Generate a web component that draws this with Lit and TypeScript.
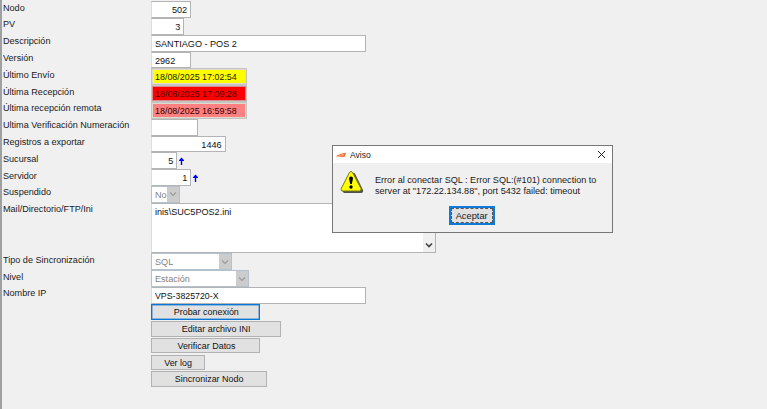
import { LitElement, html, css, svg } from "lit";
import { customElement } from "lit/decorators.js";
import { styleMap } from "lit/directives/style-map.js";

type Row = {
  label?: string;
  kind: "input" | "date" | "combo" | "area" | "button";
  value: string;
  width: number;
  tone?: string;
  arrow?: boolean;
};

const ROWS: Row[] = [
  { label: "Nodo", kind: "input", value: "502", width: 40, tone: "right" },
  { label: "PV", kind: "input", value: "3", width: 33, tone: "right" },
  { label: "Descripción", kind: "input", value: "SANTIAGO - POS 2", width: 215 },
  { label: "Versión", kind: "input", value: "2962", width: 40 },
  { label: "Último Envío", kind: "date", value: "18/08/2025 17:02:54", width: 96, tone: "yellow" },
  { label: "Última Recepción", kind: "date", value: "18/08/2025 17:09:28", width: 96, tone: "red" },
  { label: "Última recepción remota", kind: "date", value: "18/08/2025 16:59:58", width: 96, tone: "pink" },
  { label: "Ultima Verificación Numeración", kind: "input", value: "", width: 47 },
  { label: "Registros a exportar", kind: "input", value: "1446", width: 75, tone: "right" },
  { label: "Sucursal", kind: "input", value: "5", width: 26, tone: "right", arrow: true },
  { label: "Servidor", kind: "input", value: "1", width: 40, tone: "right", arrow: true },
  { label: "Suspendido", kind: "combo", value: "No", width: 29 },
  { label: "Mail/Directorio/FTP/Ini", kind: "area", value: "inis\\SUC5POS2.ini", width: 285 },
  { label: "Tipo de Sincronización", kind: "combo", value: "SQL", width: 81 },
  { label: "Nivel", kind: "combo", value: "Estación", width: 98 },
  { label: "Nombre IP", kind: "input", value: "VPS-3825720-X", width: 215, tone: "tight" },
  { kind: "button", value: "Probar conexión", width: 109, tone: "focused" },
  { kind: "button", value: "Editar archivo INI", width: 130 },
  { kind: "button", value: "Verificar Datos", width: 109 },
  { kind: "button", value: "Ver log", width: 54 },
  { kind: "button", value: "Sincronizar Nodo", width: 116 },
];

const chevron = svg`<path d="M1 1.5 L4 4.5 L7 1.5" fill="none" stroke="currentColor" stroke-width="1.1"/>`;

@customElement("app-root")
export class AppRoot extends LitElement {
  static styles = css`
    :host {
      display: block;
      position: relative;
      box-sizing: border-box;
      width: 767px;
      height: 409px;
      overflow: hidden;
      background: #f0f0f0;
      border-left: 2px solid #a0a0a0;
      font: 9.7px/12px "Liberation Sans", Arial, sans-serif;
      color: #1a1a1a;
    }
    * { box-sizing: border-box; }
    .t { display: inline-block; transform: scaleX(0.938); transform-origin: left; white-space: nowrap; }
    .right .t { transform-origin: right; }
    .tight .t { transform: scaleX(0.907); }
    .date .t { transform: scaleX(0.92); }
    .button .t { transform: scaleX(0.923); transform-origin: center; }
    .accept .t { transform: scaleX(0.96); transform-origin: center; }
    .form { padding-top: 1.2px; display: flex; flex-direction: column; }
    .row { display: grid; grid-template-columns: 149px auto; height: 16.8px; flex: none; }
    .row.area-row { height: 50.6px; }
    .label { padding: 0.4px 0 0 1px; white-space: nowrap; }
    .cell { display: flex; height: 100%; }
    .field {
      background: #fff;
      border: 1px solid #b4b4b4;
      border-left-color: #dcdcdc;
      height: 16.8px;
      padding: 2px 2.5px 0;
      white-space: nowrap;
      color: #111;
    }
    .right { text-align: right; padding-right: 3px; }
    .date { padding: 2px 2.5px 0; border: 1px solid #c4c4c4; box-shadow: inset 0 0 0 1px #e0dccb; color: #201800; }
    .yellow { background: #ff0; }
    .red { background: #f00; color: #480000; box-shadow: inset 0 0 0 1px #d88; }
    .pink { background: #ff8080; color: #300; }
    .arrow { width: 5px; height: 9px; margin: 5px 0 0 2px; color: #00f; }
    .combo { display: flex; padding: 0; border: 1px solid #b5c2ce; color: #838383; }
    .combo-text { flex: 1; min-width: 0; padding: 2px 0 0 2.5px; }
    .combo-btn { width: 12px; flex: none; background: #ccc; color: #999; display: flex; align-items: center; justify-content: center; }
    .combo-btn svg, .scroll svg { width: 8px; height: 6px; }
    .area { height: 50.6px; display: flex; padding: 0; }
    .area-text { flex: 1; padding: 2px 2.5px; }
    .scroll { width: 12px; background: #f0f0f0; color: #404040; display: flex; align-items: flex-end; justify-content: center; padding-bottom: 4px; }
    .scroll path { stroke-width: 1.6; }
    .button {
      height: 15.5px;
      margin-top: .5px;
      border: 1px solid #b2b2b2;
      background: #e1e1e1;
      text-align: center;
      line-height: 14px;
      padding-left: 1px;
      color: #111;
    }
    .focused { border-color: #0878d7; box-shadow: inset 0 0 0 .5px #3c8edb; }
    .dialog {
      position: absolute;
      left: 330px;
      top: 145px;
      width: 281px;
      height: 88px;
      border: 1px solid #777;
      background: #f0f0f0;
      display: flex;
      flex-direction: column;
    }
    .title { height: 17px; flex: none; background: #fff; display: flex; align-items: center; padding: 0 6px 0 3px; font-size: 9px; }
    .title-text { flex: 1; padding-left: 4px; }
    .title-text .t { transform: scaleX(0.95); }
    .logo { width: 10px; height: 6px; }
    .close { width: 9px; height: 9px; }
    .message { display: flex; padding: 7px 0 0 7px; height: 43px; flex: none; }
    .warn { width: 24px; height: 24px; flex: none; }
    .msg-text { padding: 3.5px 0 0 11px; line-height: 11.2px; white-space: nowrap; }
    .accept { align-self: center; width: 46px; height: 19px; border: 2px solid #0f7ad8; background: #e1e1e1; padding: 0; margin-right: 1px; }
    .accept-inner { height: 15px; border: 1px dashed #555; line-height: 14px; text-align: center; }
  `;

  private field(r: Row) {
    const width = styleMap({ width: `${r.width}px` });
    const text = html`<span class="t">${r.value}</span>`;
    switch (r.kind) {
      case "combo":
        return html`<div class="field combo" style=${width}><span class="combo-text">${text}</span><span class="combo-btn"><svg viewBox="0 0 8 6">${chevron}</svg></span></div>`;
      case "area":
        return html`<div class="field area" style=${width}><span class="area-text">${text}</span><span class="scroll"><svg viewBox="0 0 8 6">${chevron}</svg></span></div>`;
      case "button":
        return html`<div class="button ${r.tone ?? ""}" style=${width}>${text}</div>`;
      default:
        return html`<div class="field ${r.kind} ${r.tone ?? ""}" style=${width}>${text}</div>`;
    }
  }

  render() {
    return html`
      <div class="form">
        ${ROWS.map(
          (r) => html`<div class="row ${r.kind === "area" ? "area-row" : ""}">
            <div class="label"><span class="t">${r.label ?? ""}</span></div>
            <div class="cell">
              ${this.field(r)}
              ${r.arrow ? html`<svg class="arrow" viewBox="0 0 5 9"><path d="M2.5 0.4 L5 3.2 V4 H0 V3.2 Z" fill="currentColor"/><path d="M2.5 2 V8" stroke="currentColor" stroke-width="1.4"/></svg>` : ""}
            </div>
          </div>`
        )}
      </div>
      <div class="dialog">
        <div class="title">
          <svg class="logo" viewBox="0 0 10 6">
            <path d="M0 4.6 Q1 2.5 4 2.2 L3.4 2.8 Q5 1 10 .7 L8.8 4.7 Q7 5.6 4 4.8 Z" fill="#f07038"/>
            <path d="M1 4 H4.2 M5 2.4 H8 M4.6 3.8 H7.7" stroke="#ffd0b8" stroke-width=".6"/>
          </svg>
          <span class="title-text"><span class="t">Aviso</span></span>
          <svg class="close" viewBox="0 0 9 9"><path d="M1 1 L8 8 M8 1 L1 8" stroke="#222" stroke-width="1"/></svg>
        </div>
        <div class="message">
          <svg class="warn" viewBox="0 0 24 24">
            <path d="M12.8 3 Q14 2 15.2 4 L23 20 Q23.5 23 21 23 H4 L2 21 Z" fill="#505050"/>
            <path d="M9.4 2.6 Q11 .2 12.6 2.6 L21 18.6 Q21.6 21 19.5 21 H2.7 Q.4 21 1.2 18.6 Z" fill="#ff0" stroke="#77770c" stroke-width="1"/>
            <path d="M9 8.5 Q9 6.5 11 6.5 Q13 6.5 13 8.5 L11.8 14 H10.2 Z" fill="#000"/>
            <circle cx="11" cy="17" r="1.7" fill="#000"/>
          </svg>
          <div class="msg-text"><span class="t">Error al conectar SQL : Error SQL:(#101) connection to<br />server at "172.22.134.88", port 5432 failed: timeout</span></div>
        </div>
        <div class="accept"><div class="accept-inner"><span class="t">Aceptar</span></div></div>
      </div>
    `;
  }
}
